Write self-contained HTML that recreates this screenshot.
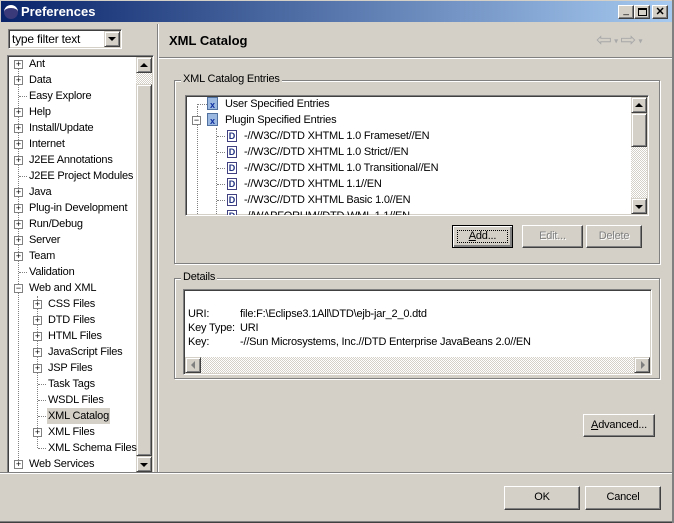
<!DOCTYPE html>
<html><head><style>
*{box-sizing:border-box}
body{margin:0;width:674px;height:523px;background:#d4d0c8;font-family:"Liberation Sans",Tahoma,sans-serif;font-size:11px;letter-spacing:-0.2px;color:#000;position:relative;overflow:hidden}
.a{position:absolute}
.sunk{border:1px solid;border-color:#808080 #fff #fff #808080;box-shadow:inset 1px 1px 0 #404040,inset -1px -1px 0 #d4d0c8}
.btn{position:absolute;background:#d4d0c8;border:1px solid;border-color:#fff #404040 #404040 #fff;box-shadow:inset -1px -1px 0 #808080;text-align:center;font-size:11px}
.grp{position:absolute;border:1px solid #808080;box-shadow:1px 1px 0 #fff,inset 1px 1px 0 #fff}
.grp span{position:absolute;top:-8px;left:6px;background:#d4d0c8;padding:0 2px;font-size:11px}
.row{position:absolute;height:16px;line-height:16px;white-space:nowrap}
.pm{position:absolute;width:9px;height:9px;border:1px solid #808080;background:#fff;font-size:9px;line-height:7px;text-align:center;color:#000;letter-spacing:0}
.dl{position:absolute;border-top:1px dotted #808080;height:0}
.vl{position:absolute;border-left:1px dotted #808080;width:0}
.sb{position:absolute;background:repeating-conic-gradient(#fff 0 25%,#d4d0c8 0 50%) 0 0/2px 2px}
.arr{position:absolute;width:16px;height:16px;background:#d4d0c8;border:1px solid;border-color:#d4d0c8 #404040 #404040 #d4d0c8;box-shadow:inset 1px 1px 0 #fff,inset -1px -1px 0 #808080}
.ic{position:absolute;width:10px;height:12px;border:1px solid #404080;background:#fff;font-size:9px;line-height:10px;text-align:center;font-weight:bold;color:#203080;letter-spacing:0}
.xi{position:absolute;width:11px;height:13px;background:#9ab8e0;border:1px solid #5070a0;font-size:9px;line-height:14px;text-align:center;color:#1030a0;font-weight:bold;letter-spacing:0}
</style></head><body>
<div class="a" style="left:0;top:0;width:674px;height:23px;background:linear-gradient(90deg,#0a246a,#a6caf0);border:1px solid #d4d0c8"></div>
<div class="a" style="left:4px;top:5px;width:14px;height:14px;border-radius:50%;background:#3a3a7a;border-top:3px solid #fff"></div>
<div class="a" style="left:21px;top:4px;color:#fff;font-weight:bold;font-size:13px;letter-spacing:0">Preferences</div>
<div class="btn" style="left:618px;top:5px;width:16px;height:14px;font-size:10px;line-height:10px">_</div>
<div class="btn" style="left:634px;top:5px;width:16px;height:14px"><div class="a" style="left:3px;top:2px;width:9px;height:8px;border:1px solid #000;border-top-width:2px"></div></div>
<div class="btn" style="left:652px;top:5px;width:16px;height:14px;font-weight:bold;line-height:12px">✕</div>

<div class="a sunk" style="left:8px;top:29px;width:114px;height:20px;background:#fff"><span class="a" style="left:3px;top:2px;font-size:12px">type filter text</span></div>
<div class="arr" style="left:104px;top:31px;width:16px;height:16px"><div class="a" style="left:3px;top:5px;border:4px solid transparent;border-top:4px solid #000;border-bottom:0"></div></div>

<div class="a sunk" style="left:7px;top:55px;width:147px;height:419px;background:#fff"></div>
<div class="sb" style="left:136px;top:57px;width:16px;height:415px"></div>
<div class="arr" style="left:136px;top:57px"><div class="a" style="left:3px;top:5px;border:4px solid transparent;border-bottom:4px solid #000;border-top:0"></div></div>
<div class="arr" style="left:136px;top:456px"><div class="a" style="left:3px;top:6px;border:4px solid transparent;border-top:4px solid #000;border-bottom:0"></div></div>
<div class="arr" style="left:136px;top:84px;height:372px"></div>
<div class="vl" style="left:18px;top:64px;height:396px"></div>
<div class="vl" style="left:37px;top:296px;height:152px"></div>
<div>
<div class="row" style="left:29px;top:56px">Ant</div>
<div class="row" style="left:29px;top:72px">Data</div>
<div class="row" style="left:29px;top:88px">Easy Explore</div>
<div class="row" style="left:29px;top:104px">Help</div>
<div class="row" style="left:29px;top:120px">Install/Update</div>
<div class="row" style="left:29px;top:136px">Internet</div>
<div class="row" style="left:29px;top:152px">J2EE Annotations</div>
<div class="row" style="left:29px;top:168px">J2EE Project Modules</div>
<div class="row" style="left:29px;top:184px">Java</div>
<div class="row" style="left:29px;top:200px">Plug-in Development</div>
<div class="row" style="left:29px;top:216px">Run/Debug</div>
<div class="row" style="left:29px;top:232px">Server</div>
<div class="row" style="left:29px;top:248px">Team</div>
<div class="row" style="left:29px;top:264px">Validation</div>
<div class="row" style="left:29px;top:280px">Web and XML</div>
<div class="row" style="left:48px;top:296px">CSS Files</div>
<div class="row" style="left:48px;top:312px">DTD Files</div>
<div class="row" style="left:48px;top:328px">HTML Files</div>
<div class="row" style="left:48px;top:344px">JavaScript Files</div>
<div class="row" style="left:48px;top:360px">JSP Files</div>
<div class="row" style="left:48px;top:376px">Task Tags</div>
<div class="row" style="left:48px;top:392px">WSDL Files</div>
<div class="row" style="left:47px;top:408px;background:#d4d0c8;padding:0 1px">XML Catalog</div>
<div class="row" style="left:48px;top:424px">XML Files</div>
<div class="row" style="left:48px;top:440px">XML Schema Files</div>
<div class="row" style="left:29px;top:456px">Web Services</div>
</div>
<div class="pm" style="left:14px;top:60px">+</div>
<div class="pm" style="left:14px;top:76px">+</div>
<div class="dl" style="left:19px;top:96px;width:8px"></div>
<div class="pm" style="left:14px;top:108px">+</div>
<div class="pm" style="left:14px;top:124px">+</div>
<div class="pm" style="left:14px;top:140px">+</div>
<div class="pm" style="left:14px;top:156px">+</div>
<div class="dl" style="left:19px;top:176px;width:8px"></div>
<div class="pm" style="left:14px;top:188px">+</div>
<div class="pm" style="left:14px;top:204px">+</div>
<div class="pm" style="left:14px;top:220px">+</div>
<div class="pm" style="left:14px;top:236px">+</div>
<div class="pm" style="left:14px;top:252px">+</div>
<div class="dl" style="left:19px;top:272px;width:8px"></div>
<div class="pm" style="left:14px;top:284px">−</div>
<div class="pm" style="left:33px;top:300px">+</div>
<div class="pm" style="left:33px;top:316px">+</div>
<div class="pm" style="left:33px;top:332px">+</div>
<div class="pm" style="left:33px;top:348px">+</div>
<div class="pm" style="left:33px;top:364px">+</div>
<div class="dl" style="left:38px;top:384px;width:8px"></div>
<div class="dl" style="left:38px;top:400px;width:8px"></div>
<div class="dl" style="left:38px;top:416px;width:8px"></div>
<div class="pm" style="left:33px;top:428px">+</div>
<div class="dl" style="left:38px;top:448px;width:8px"></div>
<div class="pm" style="left:14px;top:460px">+</div>

<div class="a" style="left:157px;top:24px;width:1px;height:448px;background:#808080"></div>
<div class="a" style="left:158px;top:24px;width:1px;height:448px;background:#fff"></div>
<div class="a" style="left:169px;top:33px;font-weight:bold;font-size:13px;letter-spacing:0">XML Catalog</div>
<div class="a" style="left:596px;top:29px;color:#a8a8a8;font-size:19px;letter-spacing:0">⇦<span style="font-size:8px;vertical-align:middle"> ▾ </span>⇨<span style="font-size:8px;vertical-align:middle"> ▾</span></div>
<div class="a" style="left:159px;top:57px;width:515px;height:1px;background:#808080"></div>
<div class="a" style="left:159px;top:58px;width:515px;height:1px;background:#fff"></div>

<div class="grp" style="left:174px;top:80px;width:486px;height:184px"><span>XML Catalog Entries</span></div>
<div class="a sunk" style="left:185px;top:95px;width:464px;height:121px;background:#fff;overflow:hidden">
 <div class="vl" style="left:11px;top:10px;height:110px"></div>
 <div class="vl" style="left:30px;top:32px;height:90px"></div>
 <div class="dl" style="left:11px;top:8px;width:10px"></div>
 <div class="xi" style="left:21px;top:1px">x</div><div class="row" style="left:39px;top:0">User Specified Entries</div>
 <div class="pm" style="left:6px;top:20px">−</div>
 <div class="xi" style="left:21px;top:17px">x</div><div class="row" style="left:39px;top:16px">Plugin Specified Entries</div>
 <div class="dl" style="left:31px;top:40px;width:8px"></div><div class="ic" style="left:41px;top:34px">D</div><div class="row" style="left:58px;top:32px">-//W3C//DTD XHTML 1.0 Frameset//EN</div>
 <div class="dl" style="left:31px;top:56px;width:8px"></div><div class="ic" style="left:41px;top:50px">D</div><div class="row" style="left:58px;top:48px">-//W3C//DTD XHTML 1.0 Strict//EN</div>
 <div class="dl" style="left:31px;top:72px;width:8px"></div><div class="ic" style="left:41px;top:66px">D</div><div class="row" style="left:58px;top:64px">-//W3C//DTD XHTML 1.0 Transitional//EN</div>
 <div class="dl" style="left:31px;top:88px;width:8px"></div><div class="ic" style="left:41px;top:82px">D</div><div class="row" style="left:58px;top:80px">-//W3C//DTD XHTML 1.1//EN</div>
 <div class="dl" style="left:31px;top:104px;width:8px"></div><div class="ic" style="left:41px;top:98px">D</div><div class="row" style="left:58px;top:96px">-//W3C//DTD XHTML Basic 1.0//EN</div>
 <div class="ic" style="left:41px;top:114px">D</div><div class="row" style="left:58px;top:112px">-//WAPFORUM//DTD WML 1.1//EN</div>
</div>
<div class="sb" style="left:631px;top:97px;width:16px;height:117px"></div>
<div class="arr" style="left:631px;top:97px"><div class="a" style="left:3px;top:5px;border:4px solid transparent;border-bottom:4px solid #000;border-top:0"></div></div>
<div class="arr" style="left:631px;top:113px;height:34px"></div>
<div class="arr" style="left:631px;top:198px"><div class="a" style="left:3px;top:6px;border:4px solid transparent;border-top:4px solid #000;border-bottom:0"></div></div>

<div class="btn" style="left:452px;top:225px;width:61px;height:23px;line-height:20px;border-color:#000;box-shadow:inset 1px 1px 0 #fff,inset -2px -2px 0 #808080"><div class="a" style="left:4px;top:4px;right:4px;bottom:4px;border:1px dotted #000"></div><u>A</u>dd...</div>
<div class="btn" style="left:522px;top:225px;width:61px;height:23px;line-height:20px;color:#808080;text-shadow:1px 1px 0 #fff">Edit...</div>
<div class="btn" style="left:586px;top:225px;width:56px;height:23px;line-height:20px;color:#808080;text-shadow:1px 1px 0 #fff">Delete</div>

<div class="grp" style="left:174px;top:278px;width:486px;height:101px"><span>Details</span></div>
<div class="a sunk" style="left:183px;top:289px;width:469px;height:86px;background:#fff">
 <div class="a" style="left:4px;top:17px;line-height:14px">URI:<br>Key Type:<br>Key:</div>
 <div class="a" style="left:56px;top:17px;line-height:14px;white-space:nowrap">file:F:\Eclipse3.1All\DTD\ejb-jar_2_0.dtd<br>URI<br>-//Sun Microsystems, Inc.//DTD Enterprise JavaBeans 2.0//EN</div>
</div>
<div class="sb" style="left:185px;top:357px;width:465px;height:16px"></div>
<div class="arr" style="left:185px;top:357px"><div class="a" style="left:5px;top:3px;border:4px solid transparent;border-right:4px solid #808080;border-left:0"></div></div>
<div class="arr" style="left:634px;top:357px"><div class="a" style="left:6px;top:3px;border:4px solid transparent;border-left:4px solid #808080;border-right:0"></div></div>

<div class="btn" style="left:583px;top:414px;width:72px;height:23px;line-height:20px"><u>A</u>dvanced...</div>

<div class="a" style="left:0;top:472px;width:674px;height:1px;background:#808080"></div>
<div class="a" style="left:0;top:473px;width:674px;height:1px;background:#fff"></div>
<div class="btn" style="left:504px;top:486px;width:76px;height:24px;line-height:21px">OK</div>
<div class="btn" style="left:585px;top:486px;width:76px;height:24px;line-height:21px">Cancel</div>
<div class="a" style="left:0;top:521px;width:674px;height:2px;background:#808080;border-bottom:1px solid #404040"></div>
<div class="a" style="left:672px;top:0;width:2px;height:523px;background:#808080"></div>
</body></html>
